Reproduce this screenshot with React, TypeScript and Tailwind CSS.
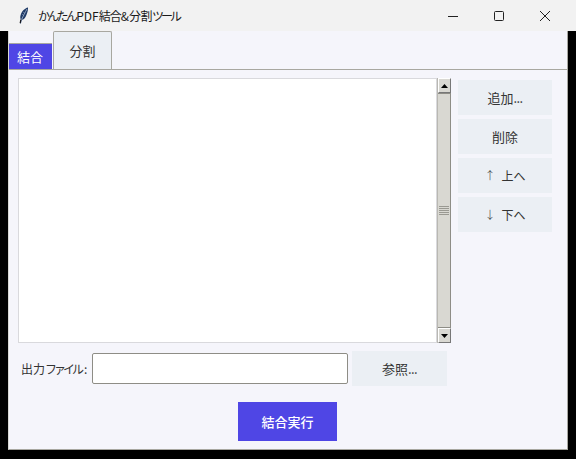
const jp = "font-['Noto_Sans_CJK_JP','Noto_Sans',sans-serif]";

function Feather() {
  return (
    <svg width="10" height="17" viewBox="0 0 12 18" preserveAspectRatio="none" className="shrink-0">
      <path d="M10.8 0.6C7 1.3 3.4 4.4 2 8.6C1.3 10.6 1.4 12.2 2.2 13.3L1.1 17.2L2.3 17.4L3.4 13.6C5.6 13.6 7.6 11.7 8.9 8.6C10.2 5.7 11.1 3 10.8 0.6Z" fill="#1f3a66" />
      <path d="M9.6 2.2C7.5 5.4 5 9.6 3 13.4" stroke="#b8c8e0" strokeWidth="0.8" fill="none" />
      <path d="M3.4 7.5L6.2 9.2M4.6 5.2L7.4 6.8" stroke="#8fa6c8" strokeWidth="0.6" fill="none" />
      <path d="M2.2 13.4L1.3 17" stroke="#111" strokeWidth="1.2" fill="none" />
    </svg>
  );
}

function SideButton({ children }: { children: React.ReactNode }) {
  return (
    <div className="w-[94px] h-[35px] bg-[#ebeff4] flex items-center justify-center text-[13px] text-[#333333]">
      {children}
    </div>
  );
}

function Arrow({ up }: { up?: boolean }) {
  return (
    <div className="w-[13px] h-[15px] bg-[#d9d8d2] border border-t-white border-l-white border-r-[#777] border-b-[#777] flex items-center justify-center shrink-0">
      <svg width="7" height="4" viewBox="0 0 7 4">
        <path d={up ? "M3.5 0L7 4H0Z" : "M0 0H7L3.5 4Z"} fill="#000" />
      </svg>
    </div>
  );
}

export default function App() {
  return (
    <div className={`w-[576px] h-[459px] bg-black flex flex-col overflow-hidden ${jp}`}>
      <div className="h-[31px] bg-[#f2f2f2] flex items-center shrink-0">
        <div className="ml-[19px]"><Feather /></div>
        <span className="ml-[9px] text-[12px] text-[#1a1a1a] leading-none whitespace-nowrap">
          <span className="tracking-[-2.7px]">かんたん</span>
          <span className="ml-[1px]">PDF</span>
          <span className="tracking-[-1px]">結合</span>
          <span>&amp;</span>
          <span className="tracking-[-0.5px]">分割</span>
          <span className="tracking-[-3px]">ツール</span>
        </span>
        <div className="ml-auto flex items-center mr-[21px] gap-[26px]">
          <svg width="20" height="20" viewBox="0 0 20 20"><path d="M5 10.5H15" stroke="#222" strokeWidth="1" /></svg>
          <svg width="20" height="20" viewBox="0 0 20 20"><rect x="5.5" y="5.5" width="9" height="9" rx="1" stroke="#222" strokeWidth="1" fill="none" /></svg>
          <svg width="20" height="20" viewBox="0 0 20 20"><path d="M5 5L15 15M15 5L5 15" stroke="#222" strokeWidth="1" /></svg>
        </div>
      </div>

      <div className="mx-[8px] mb-[9px] flex-1 bg-[#f5f5fb] border-l border-b border-r border-l-[#d8d8d4] border-b-[#a8a7a0] border-r-[#a8a7a0] flex flex-col min-h-0">
        <div className="h-[38px] flex items-end shrink-0">
          <div className="w-[43px] h-[26px] pr-px bg-[#4f46e5] border-t border-t-[#a8a7a0] text-white text-[13px] flex items-center justify-center">結合</div>
          <div className="ml-px w-[59px] h-[38px] bg-[#ebeff4] border border-b-0 border-[#a8a7a0] rounded-t-[2px] text-[#333333] text-[13px] flex items-center justify-center">分割</div>
        </div>
        <div className="flex-1 border-t border-[#a8a7a0] pt-[8px] pl-[9px] flex flex-col min-h-0">
          <div className="flex h-[265px] shrink-0">
            <div className="w-[419px] bg-white border border-[#d9d9dd]" />
            <div className="w-[14px] bg-[#d9d8d2] border-r border-[#8e8d86] border-l border-l-[#b9b8b2] flex flex-col justify-between">
              <Arrow up />
              <div className="flex-1 border-y border-[#8e8d86] bg-[#d9d8d2] flex flex-col items-center justify-center gap-[1px]">
                {[0, 1, 2, 3, 4].map((i) => (
                  <div key={i} className="w-[10px] h-px bg-[#9a9992]" />
                ))}
              </div>
              <Arrow />
            </div>
            <div className="ml-[7px] pt-[2px] flex flex-col gap-[4px]">
              <SideButton>追加<span className="tracking-[-0.6px]">...</span></SideButton>
              <SideButton>削除</SideButton>
              <SideButton><span className="mr-[6px] text-[11px] font-light text-[#333333]">↑</span><span className="text-[12px]">上へ</span></SideButton>
              <SideButton><span className="mr-[6px] text-[11px] font-light text-[#333333]">↓</span><span className="text-[12px]">下へ</span></SideButton>
            </div>
          </div>
          <div className="flex items-center mt-[8px] h-[35px] shrink-0">
            <span className="ml-[3px] w-[71px] text-[12px] text-[#333333] whitespace-nowrap">
              出力<span className="tracking-[-3px]">ファイル</span><span className="ml-[3px]">:</span>
            </span>
            <div className="w-[256px] h-[31px] bg-white border border-[#8e8d86] rounded-[2px]" />
            <div className="ml-[4px] w-[95px] h-[35px] bg-[#ebeff4] flex items-center justify-center text-[13px] text-[#333333]">参照<span className="tracking-[-0.6px]">...</span></div>
          </div>
          <div className="mt-[16px] ml-[220px] w-[99px] h-[39px] bg-[#4f46e5] text-white text-[13px] font-medium flex items-center justify-center">結合実行</div>
        </div>
      </div>
    </div>
  );
}
